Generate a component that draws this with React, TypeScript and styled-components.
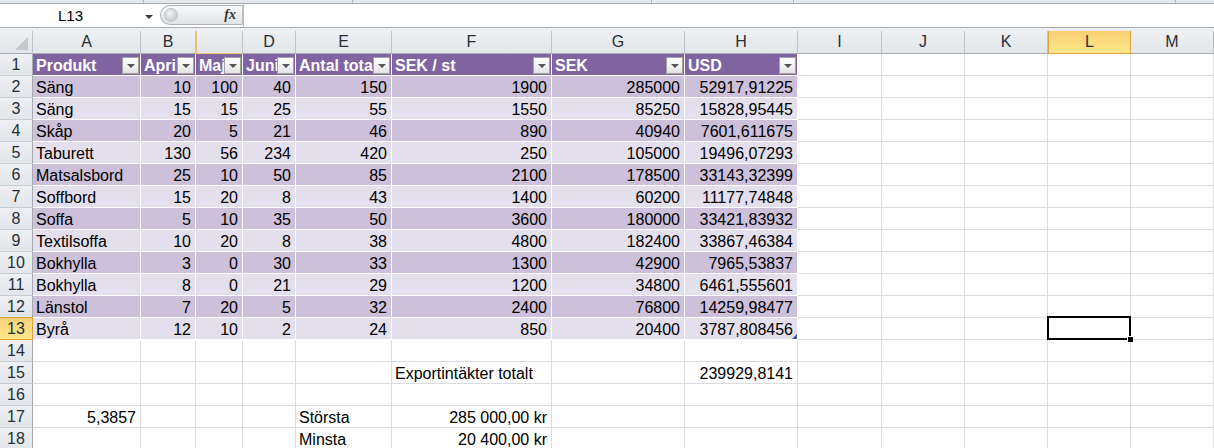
import styled, { createGlobalStyle } from "styled-components";
import { Fragment, FunctionComponent } from "react";

type Tone = "head" | "dark" | "light" | "plain";

const COLUMNS = ["A", "B", "C", "D", "E", "F", "G", "H", "I", "J", "K", "L", "M"];
const WIDTHS = [108, 55, 47, 53, 96, 160, 133, 113, 84, 83, 83, 83, 83];
const TABLE_COLS = 8;
const SELECTED = { row: 13, col: 11 };

const HEADERS = ["Produkt", "April", "Maj", "Juni", "Antal total", "SEK / st", "SEK", "USD"];

const DATA: string[][] = [
  ["Säng", "10", "100", "40", "150", "1900", "285000", "52917,91225"],
  ["Säng", "15", "15", "25", "55", "1550", "85250", "15828,95445"],
  ["Skåp", "20", "5", "21", "46", "890", "40940", "7601,611675"],
  ["Taburett", "130", "56", "234", "420", "250", "105000", "19496,07293"],
  ["Matsalsbord", "25", "10", "50", "85", "2100", "178500", "33143,32399"],
  ["Soffbord", "15", "20", "8", "43", "1400", "60200", "11177,74848"],
  ["Soffa", "5", "10", "35", "50", "3600", "180000", "33421,83932"],
  ["Textilsoffa", "10", "20", "8", "38", "4800", "182400", "33867,46384"],
  ["Bokhylla", "3", "0", "30", "33", "1300", "42900", "7965,53837"],
  ["Bokhylla", "8", "0", "21", "29", "1200", "34800", "6461,555601"],
  ["Länstol", "7", "20", "5", "32", "2400", "76800", "14259,98477"],
  ["Byrå", "12", "10", "2", "24", "850", "20400", "3787,808456"],
];

// rows below the table, keyed by column index
const EXTRA: Record<number, Record<number, string>> = {
  14: {},
  15: { 5: "Exportintäkter totalt", 7: "239929,8141" },
  16: {},
  17: { 0: "5,3857", 4: "Största", 5: "285 000,00 kr" },
  18: { 4: "Minsta", 5: "20 400,00 kr" },
};

const isNumber = (s: string) => /^[\d\s,]+(kr)?$/.test(s);

const GlobalStyle = createGlobalStyle`
  html, body {
    margin: 0;
    padding: 0;
    background: #fff;
    overflow: hidden;
  }
  body {
    font-family: "Liberation Sans", Arial, sans-serif;
  }
`;

const TopStrip = styled.div`
  display: flex;
  height: 3px;
  background: #e4e8ed;
  border-bottom: 1px solid #a8adb3;
`;

const StripSegment = styled.div<{ $w: number }>`
  flex: none;
  width: ${({ $w }) => $w}px;
  box-sizing: border-box;
  border-right: 1px solid #b3b8be;
`;

const FormulaBar = styled.div`
  display: flex;
  height: 23px;
  background: #fff;
  border-bottom: 1px solid #a8adb3;
`;

const NameBox = styled.div`
  flex: none;
  width: 155px;
  display: flex;
  align-items: center;
`;

const NameText = styled.span`
  width: 141px;
  text-align: center;
  font-size: 15px;
  color: #000;
`;

const DropArrow = styled.span`
  width: 0;
  height: 0;
  margin-left: 4px;
  margin-top: 2px;
  border-left: 4px solid transparent;
  border-right: 4px solid transparent;
  border-top: 4px solid #3c3c3c;
`;

const FxPill = styled.div`
  flex: none;
  width: 83px;
  margin-left: 5px;
  margin-top: 1px;
  height: 20px;
  box-sizing: border-box;
  display: flex;
  align-items: center;
  justify-content: space-between;
  padding: 0 6px 0 3px;
  border: 1px solid #adb2b8;
  border-right-color: #b9bec4;
  border-radius: 11px 0 0 11px;
  background: linear-gradient(#f7f8f9, #e1e3e6);
`;

const Knob = styled.span`
  width: 12px;
  height: 12px;
  border-radius: 50%;
  background: radial-gradient(circle at 40% 35%, #f4f4f4, #c9ccd0 70%);
  border: 1px solid #c2c6cb;
`;

const Fx = styled.span`
  font-family: "Liberation Serif", "Times New Roman", serif;
  font-style: italic;
  font-weight: 700;
  font-size: 14px;
  color: #333;
`;

const FormulaInput = styled.div`
  flex: 1;
  border-left: 1px solid #b9bec4;
`;

const Gap = styled.div`
  height: 3px;
  background: #eceef1;
`;

const Sheet = styled.div`
  display: grid;
  grid-template-columns: 33px ${WIDTHS.map((w) => `${w}px`).join(" ")};
  grid-template-rows: 23px;
  grid-auto-rows: 22px;
`;

const HeaderBase = styled.div`
  box-sizing: border-box;
  background: linear-gradient(#eef0f3, #e2e5e9);
  border-right: 1px solid #bcc1c7;
  border-bottom: 1px solid #a6abb1;
  color: #262f38;
  font-size: 16px;
  text-align: center;
`;

const Corner = styled(HeaderBase)`
  position: relative;
  &::after {
    content: "";
    position: absolute;
    right: 4px;
    bottom: 3px;
    width: 13px;
    height: 13px;
    background: #c4c8cd;
    clip-path: polygon(100% 0, 100% 100%, 0 100%);
  }
`;

const ColHeader = styled(HeaderBase)<{ $selected?: boolean; $ghost?: boolean }>`
  line-height: 22px;
  ${({ $selected }) =>
    $selected &&
    `
    background: linear-gradient(#f9cf72, #fde98c);
    border: 1px solid #e0a23d;
    border-top: none;
    line-height: 21px;
  `}
  ${({ $ghost }) =>
    $ghost &&
    `
    border-left: 1px solid #ecc57a;
    border-bottom-color: #ecc57a;
  `}
`;

const RowHeader = styled(HeaderBase)<{ $selected?: boolean }>`
  line-height: 21px;
  border-right-color: #a6abb1;
  border-bottom-color: #c9cdd2;
  ${({ $selected }) =>
    $selected &&
    `
    background: linear-gradient(#f9d27a, #fde68b);
    border-top: 1px solid #e0a23d;
    border-bottom: 1px solid #e0a23d;
    border-right: 1px solid #e0a23d;
    margin-top: -1px;
  `}
`;

const toneBg: Record<Tone, string> = {
  head: "#8064a2",
  dark: "#ccc0da",
  light: "#e4dfec",
  plain: "#fff",
};

const Cell = styled.div<{ $tone: Tone; $right: boolean }>`
  position: relative;
  box-sizing: border-box;
  background: ${({ $tone }) => toneBg[$tone]};
  border-right: 1px solid ${({ $tone }) => ($tone === "plain" ? "#dadcdd" : "#fff")};
  border-bottom: 1px solid ${({ $tone }) => ($tone === "plain" ? "#dadcdd" : "#fff")};
  color: ${({ $tone }) => ($tone === "head" ? "#fff" : "#000")};
  font-weight: ${({ $tone }) => ($tone === "head" ? 700 : 400)};
  font-size: 16px;
  line-height: 21px;
  padding: 1px 4px 0 3px;
  text-align: ${({ $right }) => ($right ? "right" : "left")};
  white-space: nowrap;
  overflow: ${({ $tone }) => ($tone === "head" ? "hidden" : "visible")};
`;

const FilterButton = styled.span`
  position: absolute;
  top: 3px;
  right: 1px;
  width: 17px;
  height: 17px;
  box-sizing: border-box;
  border: 1px solid #a2a2a2;
  background: linear-gradient(#ffffff, #e4e4e4);
  &::after {
    content: "";
    position: absolute;
    left: 4px;
    top: 6px;
    border-left: 4px solid transparent;
    border-right: 4px solid transparent;
    border-top: 4px solid #555;
  }
`;

const ResizeHandle = styled.span`
  position: absolute;
  right: 0;
  bottom: 0;
  width: 5px;
  height: 5px;
  background: #4154b0;
  clip-path: polygon(100% 0, 100% 100%, 0 100%);
`;

const Selection = styled.span`
  position: absolute;
  z-index: 2;
  left: -1px;
  top: -2px;
  right: -1px;
  bottom: -1px;
  border: 2px solid #000;
  &::after {
    content: "";
    position: absolute;
    right: -4px;
    bottom: -4px;
    width: 5px;
    height: 5px;
    background: #000;
    border: 1px solid #fff;
    border-right: none;
    border-bottom: none;
  }
`;

const cellText = (row: number, col: number): string | undefined => {
  if (row === 1) return col < TABLE_COLS ? HEADERS[col] : undefined;
  if (row <= 13) return col < TABLE_COLS ? DATA[row - 2][col] : undefined;
  return EXTRA[row]?.[col];
};

const toneOf = (row: number, col: number): Tone => {
  if (col >= TABLE_COLS || row > 13) return "plain";
  if (row === 1) return "head";
  return row % 2 === 0 ? "dark" : "light";
};

const App: FunctionComponent = () => {
  const rows = Array.from({ length: 18 }, (_, i) => i + 1);
  return (
    <>
      <GlobalStyle />
      <TopStrip>
        {[144, 209, 299, 142, 382].map((w, i) => (
          <StripSegment key={i} $w={w} />
        ))}
      </TopStrip>
      <FormulaBar>
        <NameBox>
          <NameText>L13</NameText>
          <DropArrow />
        </NameBox>
        <FxPill>
          <Knob />
          <Fx>fx</Fx>
        </FxPill>
        <FormulaInput />
      </FormulaBar>
      <Gap />
      <Sheet>
        <Corner />
        {COLUMNS.map((c, i) => (
          <ColHeader key={c} $selected={i === SELECTED.col} $ghost={c === "C"}>
            {c === "C" ? "" : c}
          </ColHeader>
        ))}
        {rows.map((row) => (
          <Fragment key={row}>
            <RowHeader $selected={row === SELECTED.row}>{row}</RowHeader>
            {COLUMNS.map((c, col) => {
              const text = cellText(row, col);
              const tone = toneOf(row, col);
              return (
                <Cell
                  key={`${c}${row}`}
                  $tone={tone}
                  $right={tone !== "head" && !!text && isNumber(text)}
                >
                  {text}
                  {tone === "head" && <FilterButton />}
                  {row === 13 && col === TABLE_COLS - 1 && <ResizeHandle />}
                  {row === SELECTED.row && col === SELECTED.col && <Selection />}
                </Cell>
              );
            })}
          </Fragment>
        ))}
      </Sheet>
    </>
  );
};

export default App;
